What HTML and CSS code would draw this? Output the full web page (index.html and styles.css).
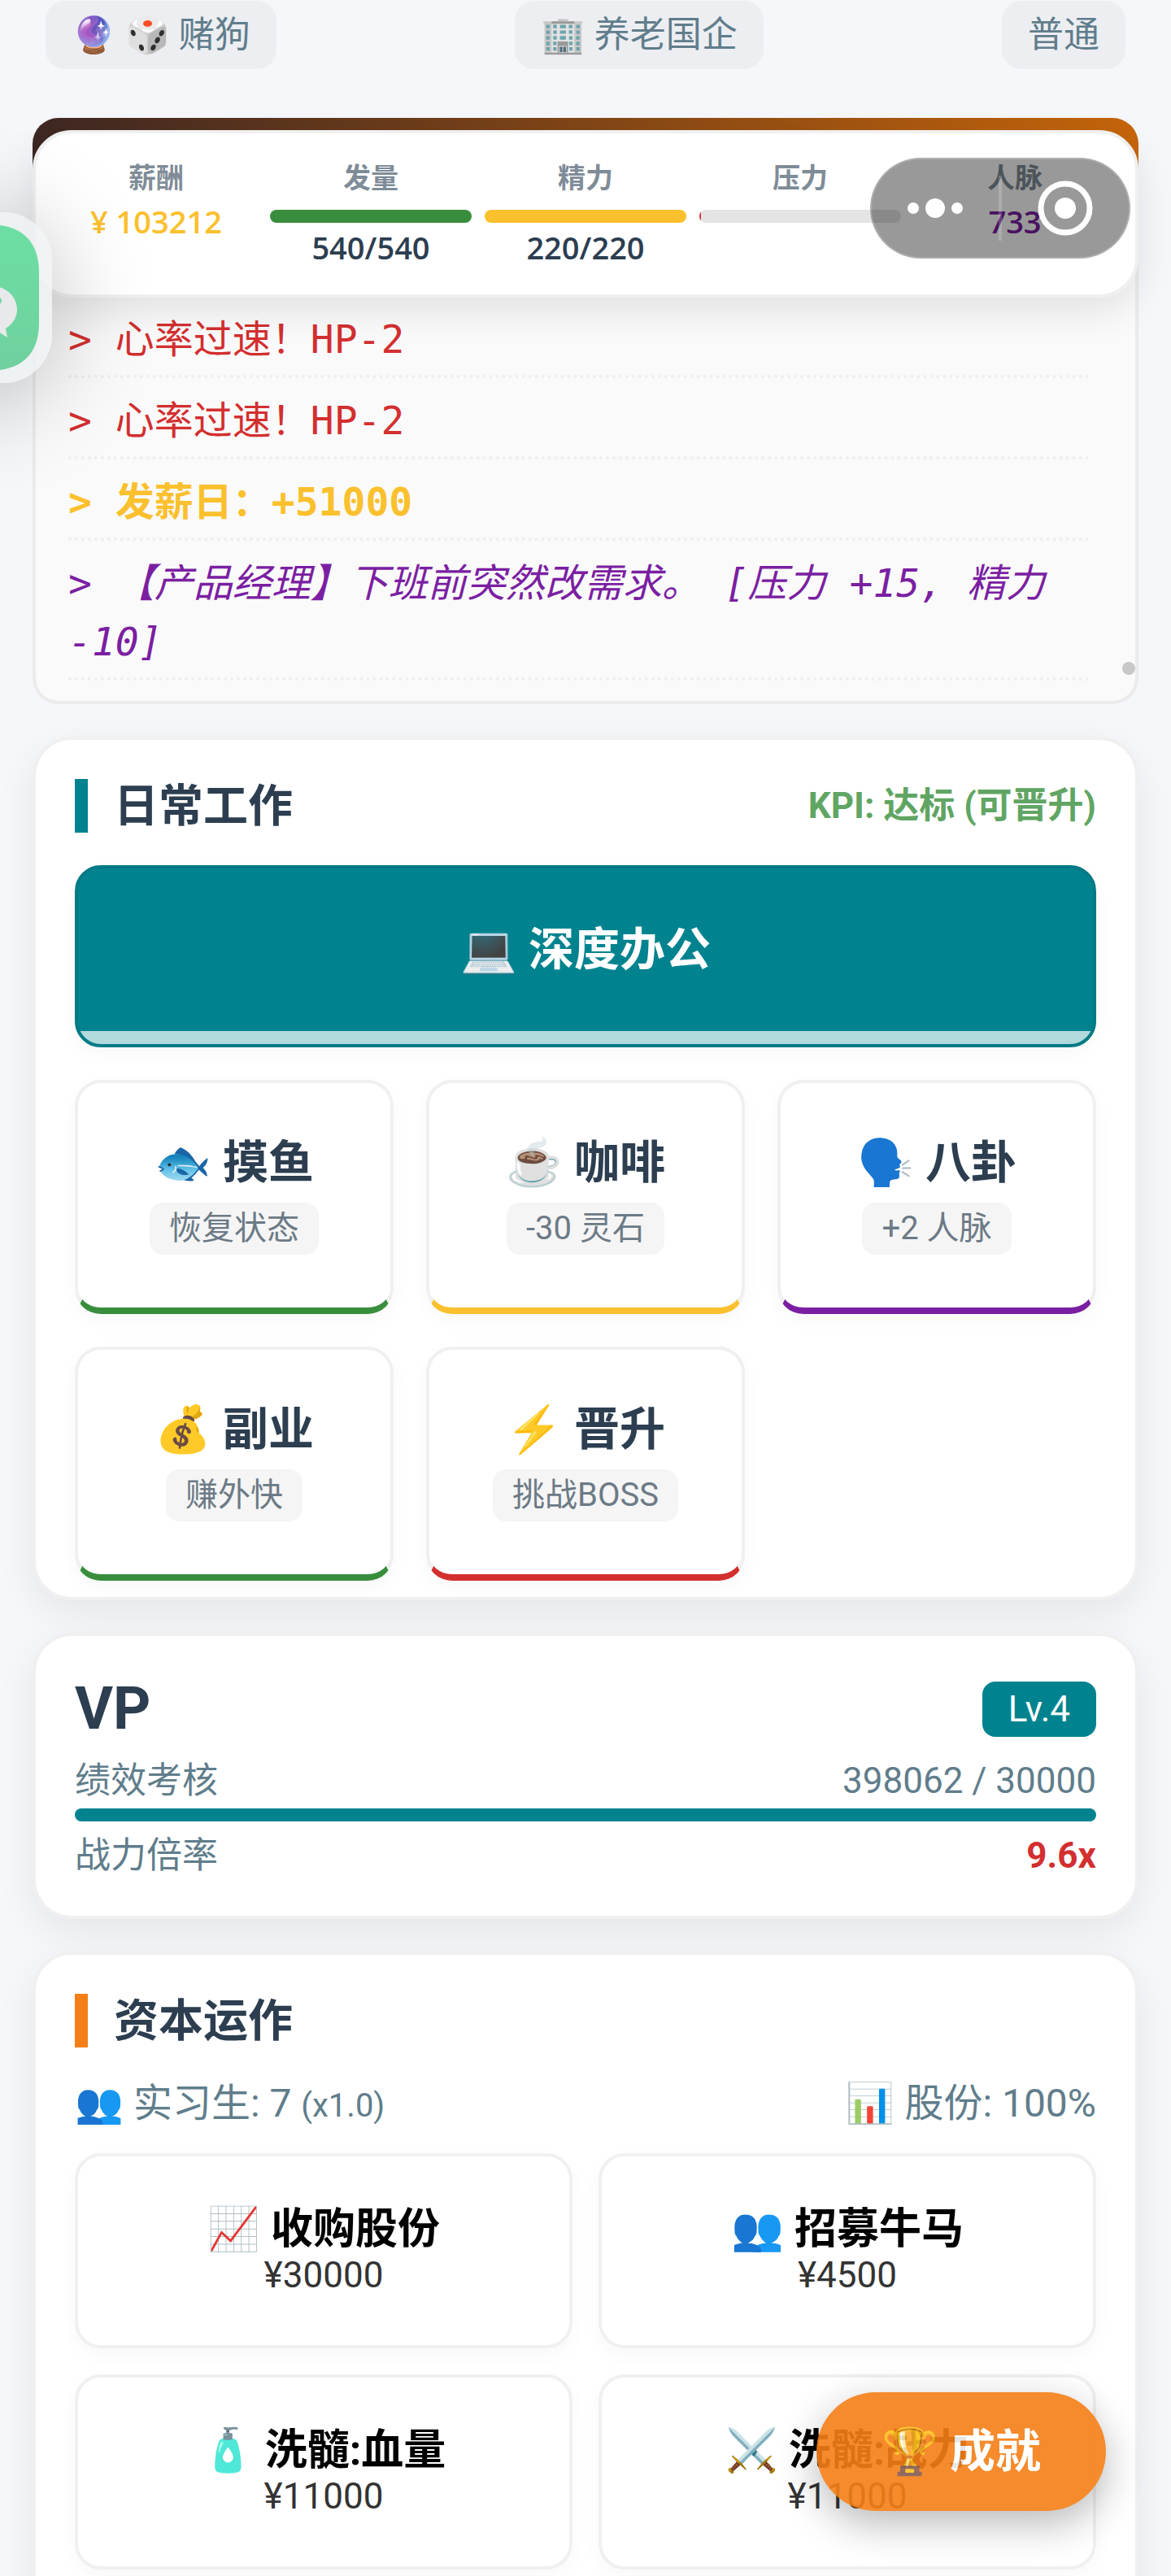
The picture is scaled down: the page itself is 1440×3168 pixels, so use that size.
FILE: index.html
```html
<!doctype html>
<html lang="zh-CN">
<head>
  <meta charset="utf-8">

  <meta name="viewport" content="width=device-width, initial-scale=1">

  <title>日常工作</title>

  <link rel="stylesheet" href="styles.css">

</head>
<body>

  <div class="app">

    <div class="tags">
      <span class="tag">🔮 🎲 赌狗</span>
      <span class="tag">🏢 养老国企</span>
      <span class="tag">普通</span>
    </div>

    <div class="stage">
      <div class="banner"></div>
      <ul class="log">
        <li class="log-item danger">&gt; 心率过速！HP-2</li>
        <li class="log-item danger">&gt; 心率过速！HP-2</li>
        <li class="log-item gold">&gt; 发薪日：+51000</li>
        <li class="log-item event">&gt; 【产品经理】下班前突然改需求。 [压力 +15, 精力 -10]</li>
      </ul>
      <span class="scroll-thumb"></span>

      <!-- status bar, stays on top of the log -->
      <div class="status">
        <div class="stat">
          <span class="stat-label">薪酬</span>
          <span class="stat-value money">¥ 103212</span>
        </div>
        <div class="stat">
          <span class="stat-label">发量</span>
          <div class="bar"><div class="fill green" style="width: 100%"></div></div>
          <span class="stat-value">540/540</span>
        </div>
        <div class="stat">
          <span class="stat-label">精力</span>
          <div class="bar"><div class="fill yellow" style="width: 100%"></div></div>
          <span class="stat-value">220/220</span>
        </div>
        <div class="stat">
          <span class="stat-label">压力</span>
          <div class="bar"><div class="fill red" style="width: 1%"></div></div>
        </div>
        <div class="stat">
          <span class="stat-label">人脉</span>
          <span class="stat-value network">733</span>
        </div>
      </div>
    </div>

    <section class="card work">
      <div class="card-head">
        <h2 class="title">日常工作</h2>
        <span class="kpi">KPI: 达标 (可晋升)</span>
      </div>
      <div class="actions">
        <button class="btn btn-main">💻 深度办公</button>
        <button class="btn action b-green"><span class="name">🐟 摸鱼</span><span class="hint">恢复状态</span></button>
        <button class="btn action b-yellow"><span class="name">☕ 咖啡</span><span class="hint">-30 灵石</span></button>
        <button class="btn action b-purple"><span class="name">🗣️ 八卦</span><span class="hint">+2 人脉</span></button>
        <button class="btn action b-green"><span class="name">💰 副业</span><span class="hint">赚外快</span></button>
        <button class="btn action b-red"><span class="name">⚡ 晋升</span><span class="hint">挑战BOSS</span></button>
      </div>
    </section>

    <section class="card">
      <div class="rank">
        <h2 class="rank-name">VP</h2>
        <span class="level">Lv.4</span>
      </div>
      <div class="row">
        <span>绩效考核</span>
        <span>398062 / 30000</span>
      </div>
      <div class="bar"><div class="fill teal" style="width: 100%"></div></div>
      <div class="row">
        <span>战力倍率</span>
        <strong class="power">9.6x</strong>
      </div>
    </section>

    <section class="card">
      <div class="card-head">
        <h2 class="title orange">资本运作</h2>
      </div>
      <div class="assets">
        <span>👥 实习生: 7 <small>(x1.0)</small></span>
        <span>📊 股份: 100%</span>
      </div>
      <div class="shop">
        <button class="btn item"><b>📈 收购股份</b><span>¥30000</span></button>
        <button class="btn item"><b>👥 招募牛马</b><span>¥4500</span></button>
        <button class="btn item"><b>🧴 洗髓:血量</b><span>¥11000</span></button>
        <button class="btn item"><b>⚔️ 洗髓:战力</b><span>¥11000</span></button>
      </div>
    </section>

  </div>

  <button class="achieve">🏆 成就</button>

  <!-- mini program capsule -->
  <div class="capsule">
    <button class="cap-btn" aria-label="更多">
      <svg width="68" height="68" viewBox="0 0 68 68" fill="#fff">
        <circle cx="7" cy="34" r="7"/>
        <circle cx="34" cy="34" r="12"/>
        <circle cx="61" cy="34" r="7"/>
      </svg>
    </button>
    <button class="cap-btn" aria-label="关闭">
      <svg width="68" height="68" viewBox="0 0 68 68">
        <circle cx="34" cy="34" r="30" fill="none" stroke="#fff" stroke-width="7"/>
        <circle cx="34" cy="34" r="13" fill="#fff"/>
      </svg>
    </button>
  </div>

  <!-- floating chat app bubble -->
  <div class="float-app">
    <svg width="180" height="180" viewBox="0 0 180 180">
      <defs>
        <linearGradient id="g" x1="0" y1="0" x2="0" y2="1">
          <stop offset="0" stop-color="#6cdfa4"/>
          <stop offset="1" stop-color="#70d09f"/>
        </linearGradient>
      </defs>
      <path fill="url(#g)" d="M50 0H116C160 0 179 22 179 60V120C179 158 160 180 116 180H50C14 180 0 158 0 120V60C0 22 14 0 50 0Z"/>
      <path fill="#e7e9ea" d="M117 75C138 75 152 88 152 105C152 114 147 122 138 128L140 139L129 132C125 133 121 134 117 134C96 134 81 121 81 105C81 88 96 75 117 75Z"/>
      <circle cx="129" cy="94" r="4" fill="#6dd6a1"/>
    </svg>
  </div>

</body>
</html>
```
FILE: styles.css
```css
* {
  box-sizing: border-box;
}

body {
  margin: 0;
  height: 100vh;
  overflow: hidden;
  position: relative;
  background: #f5f7fb;
  color: #2c3e50;
  font-family: Roboto, "Noto Sans CJK SC", sans-serif;
}

h2, ul {
  margin: 0;
  padding: 0;
}

.app {
  display: flex;
  flex-direction: column;
  gap: 40px;
  padding: 1px 40px 0;
}

.tags {
  display: flex;
  justify-content: space-between;
  padding: 0 16px;
  margin-bottom: 20px;
}

.tag {
  padding: 16px 32px;
  border-radius: 24px;
  background: #edeef2;
  color: #607d8b;
  font-size: 44px;
  line-height: 52px;
}

/* log */

.stage {
  position: relative;
}

.banner {
  height: 120px;
  border-radius: 32px 32px 0 0;
  background: linear-gradient(100deg, #3e2723, #c8660a);
}

.log {
  list-style: none;
  padding: 108px 56px 17px 40px;
  border: 4px solid #ebebeb;
  border-top: 0;
  border-radius: 0 0 32px 32px;
  background: #fafafa;
  font-family: "DejaVu Sans Mono", "Noto Sans CJK SC", monospace;
  font-size: 48px;
  line-height: 72px;
}

.log-item {
  padding: 8px 0;
  margin-bottom: 8px;
  border-bottom: 4px dotted #eee;
}

.danger {
  color: #d32f2f;
}

.gold {
  color: #fbc02d;
  font-weight: bold;
}

.event {
  color: #7b1fa2;
  font-style: italic;
}

.scroll-thumb {
  position: absolute;
  right: 4px;
  bottom: 36px;
  width: 16px;
  height: 16px;
  border-radius: 50%;
  background: #c8c8c8;
}

/* status */

.status {
  position: absolute;
  top: 15px;
  left: 0;
  right: 0;
  display: grid;
  grid-template-columns: repeat(5, 1fr);
  gap: 16px;
  padding: 32px 24px;
  border: 4px solid #f0f0f0;
  border-radius: 48px;
  background: #fff;
  box-shadow: 0 16px 48px rgba(0, 0, 0, 0.1);
}

.stat {
  display: flex;
  flex-direction: column;
  text-align: center;
}

.stat-label {
  color: #7f8c98;
  font-size: 34px;
  font-weight: bold;
  line-height: 46px;
}

.stat-value {
  margin-top: 4px;
  font-family: "Open Sans", sans-serif;
  font-size: 38px;
  font-weight: 600;
  line-height: 52px;
}

.money {
  color: #fbc02d;
}

.network {
  color: #7b1fa2;
}

.bar {
  height: 16px;
  border-radius: 8px;
  background: #e4e4e4;
  overflow: hidden;
}

.stat .bar {
  margin-top: 16px;
}

.fill {
  height: 100%;
}

.green { background: #388e3c; }
.yellow { background: #fbc02d; }
.red { background: #d32f2f; }
.teal { background: #00838f; }

/* cards */

.card {
  padding: 48px;
  border: 4px solid #f0f0f0;
  border-radius: 48px;
  background: #fff;
  box-shadow: 0 16px 48px rgba(0, 0, 0, 0.07);
}

.work {
  padding-bottom: 20px;
}

.card-head {
  display: flex;
  justify-content: space-between;
  align-items: center;
  margin-bottom: 40px;
}

.title {
  padding-left: 32px;
  border-left: 16px solid #00838f;
  font-size: 55px;
  line-height: 66px;
}

.title.orange {
  border-color: #f57f17;
}

.kpi {
  color: #60a563;
  font-size: 44px;
  font-weight: bold;
  line-height: 52px;
}

.btn {
  border: 4px solid #f0f0f0;
  border-radius: 32px;
  background: #fff;
  box-shadow: 0 8px 24px rgba(0, 0, 0, 0.03);
  font-family: inherit;
}

.actions {
  display: grid;
  grid-template-columns: repeat(3, 1fr);
  gap: 40px;
}

.btn-main {
  grid-column: 1 / -1;
  height: 224px;
  padding: 0 0 16px;
  border-color: #007a85;
  background: linear-gradient(to top, #b2dadd 16px, #00838f 16px);
  background-origin: padding-box;
  color: #fff;
  font-size: 56px;
  font-weight: bold;
  line-height: 66px;
}

.action {
  display: flex;
  flex-direction: column;
  align-items: center;
  justify-content: center;
  gap: 16px;
  height: 288px;
  padding: 0;
  border-bottom-width: 8px;
}

.b-green { border-bottom-color: #388e3c; }
.b-yellow { border-bottom-color: #fbc02d; }
.b-purple { border-bottom-color: #7b1fa2; }
.b-red { border-bottom-color: #d32f2f; }

.name {
  color: #2c3e50;
  font-size: 56px;
  font-weight: bold;
  line-height: 66px;
}

.hint {
  padding: 8px 24px;
  border-radius: 16px;
  background: #f5f5f5;
  color: #6c7a86;
  font-size: 40px;
  line-height: 48px;
}

/* rank */

.rank {
  display: flex;
  justify-content: space-between;
  align-items: center;
  margin-bottom: 20px;
}

.rank-name {
  font-size: 72px;
  line-height: 84px;
}

.level {
  padding: 8px 32px;
  border-radius: 16px;
  background: #00838f;
  color: #fff;
  font-size: 44px;
  line-height: 52px;
}

.row {
  display: flex;
  justify-content: space-between;
  color: #607d8b;
  font-size: 44px;
  line-height: 52px;
}

.row + .bar {
  margin: 8px 0 16px;
}

.power {
  color: #d32f2f;
}

/* shop */

.assets {
  display: flex;
  justify-content: space-between;
  margin-bottom: 32px;
  color: #607d8b;
  font-size: 48px;
  line-height: 58px;
}

.assets small {
  font-size: 40px;
  line-height: 1;
}

.shop {
  display: grid;
  grid-template-columns: repeat(2, 1fr);
  gap: 32px;
}

.item {
  display: flex;
  flex-direction: column;
  align-items: center;
  justify-content: center;
  height: 240px;
  padding: 0;
  color: #333;
  font-size: 44px;
  line-height: 52px;
}

.item b {
  color: #000;
  font-size: 52px;
  line-height: 60px;
}

/* floating things */

.achieve {
  position: absolute;
  right: 80px;
  bottom: 80px;
  padding: 40px 80px;
  border: 0;
  border-radius: 73px;
  background: #f57f17;
  box-shadow: 0 16px 48px rgba(0, 0, 0, 0.3);
  color: #fff;
  font-family: inherit;
  font-size: 56px;
  font-weight: bold;
  line-height: 66px;
  opacity: 0.9;
}

.capsule {
  position: absolute;
  top: 194px;
  right: 50px;
  display: flex;
  align-items: center;
  width: 320px;
  height: 124px;
  border: 2px solid rgba(255, 255, 255, 0.2);
  border-radius: 62px;
  background: rgba(0, 0, 0, 0.4);
}

.cap-btn {
  flex: 1;
  display: flex;
  align-items: center;
  justify-content: center;
  height: 80px;
  padding: 0;
  border: 0;
  background: none;
}

.cap-btn + .cap-btn {
  border-left: 4px solid rgba(255, 255, 255, 0.2);
}

.float-app {
  position: absolute;
  top: 261px;
  left: -146px;
  padding: 15px;
  width: 210px;
  height: 210px;
  border-radius: 60px;
  background: rgba(238, 240, 241, 0.8);
  box-shadow: 0 16px 120px rgba(0, 0, 0, 0.25);
}
```
